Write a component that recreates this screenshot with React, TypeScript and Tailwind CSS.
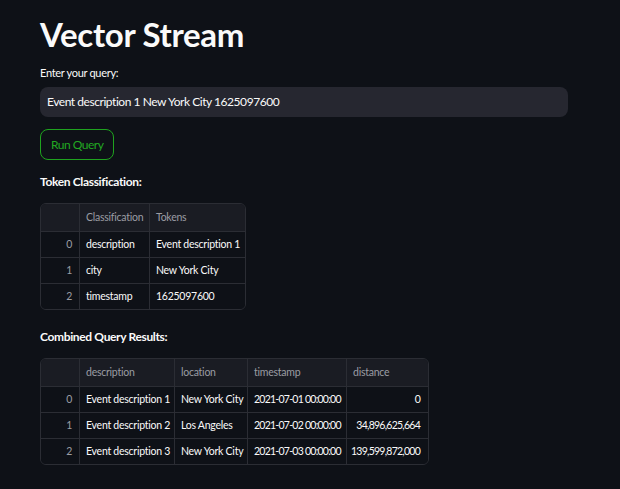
import React from 'react';

const FONT = { fontFamily: 'Lato, "Open Sans", sans-serif' };

type Col = { label: string; width: number; align?: 'right'; numeric?: boolean };

const TOKEN_COLS: Col[] = [
  { label: 'Classification', width: 70 },
  { label: 'Tokens', width: 96 },
];

const TOKEN_ROWS = [
  ['description', 'Event description 1'],
  ['city', 'New York City'],
  ['timestamp', '1625097600'],
];

const RESULT_COLS: Col[] = [
  { label: 'description', width: 95 },
  { label: 'location', width: 73 },
  { label: 'timestamp', width: 99, numeric: true },
  { label: 'distance', width: 82, align: 'right', numeric: true },
];

const RESULT_ROWS = [
  ['Event description 1', 'New York City', '2021-07-01 00:00:00', '0'],
  ['Event description 2', 'Los Angeles', '2021-07-02 00:00:00', '34,896,625,664'],
  ['Event description 3', 'New York City', '2021-07-03 00:00:00', '139,599,872,000'],
];

function DataFrame({ cols, rows }: { cols: Col[]; rows: string[][] }) {
  const template = ['38px', ...cols.map((c) => `${c.width}px`)].join(' ');
  return (
    <div className="inline-block border border-[#2b2d34] rounded-md overflow-hidden text-[10.5px] tracking-[-0.25px] leading-none">
      {/* header */}
      <div className="grid h-[27px] bg-[#1a1c23] text-[#9b9da3]" style={{ gridTemplateColumns: template }}>
        <div />
        {cols.map((c) => (
          <div key={c.label} className="flex items-center px-[6px] border-l border-[#2b2d34] whitespace-nowrap">
            {c.label}
          </div>
        ))}
      </div>
      {rows.map((r, i) => (
        <div
          key={i}
          className="grid h-[26px] border-t border-[#2b2d34] bg-[#0e1117] text-[#fafafa]"
          style={{ gridTemplateColumns: template }}
        >
          <div className="flex items-center justify-end pr-[7px] text-[#9b9da3]">{i}</div>
          {r.map((v, j) => (
            <div
              key={j}
              className={
                'flex items-center border-l border-[#2b2d34] whitespace-nowrap overflow-hidden ' +
                (cols[j].align === 'right' ? 'justify-end pl-[2px] pr-[8px] ' : 'pl-[6px] pr-[1px] ') +
                (cols[j].numeric ? 'tracking-[-0.75px]' : '')
              }
            >
              {v}
            </div>
          ))}
        </div>
      ))}
    </div>
  );
}

export default function App() {
  return (
    <div className="w-[620px] h-[489px] bg-[#0e1117] text-[#fafafa] overflow-hidden" style={FONT}>
      <div className="pl-[40px] pr-[52px] pt-[13px]">
        <h1 className="text-[33px] leading-[42px] font-bold tracking-[-0.3px]">Vector Stream</h1>

        <label className="block mt-[10px] text-[11px] tracking-[-0.3px] leading-[16px]">Enter your query:</label>
        <div className="mt-[6px] h-[30px] rounded-lg bg-[#262730] flex items-center px-[7px] text-[12px] tracking-[-0.45px]">
          Event description 1 New York City 1625097600
        </div>

        <button className="mt-[12px] h-[31px] px-[10px] rounded-lg border border-[#1fa31f] text-[#22a822] text-[12px] tracking-[-0.5px] bg-transparent">
          Run Query
        </button>

        <div className="mt-[14px] text-[12px] tracking-[-0.35px] font-bold leading-[16px]">Token Classification:</div>
        <div className="mt-[13px]">
          <DataFrame cols={TOKEN_COLS} rows={TOKEN_ROWS} />
        </div>

        <div className="mt-[13px] text-[12px] tracking-[-0.35px] font-bold leading-[16px]">Combined Query Results:</div>
        <div className="mt-[13px]">
          <DataFrame cols={RESULT_COLS} rows={RESULT_ROWS} />
        </div>
      </div>
    </div>
  );
}
